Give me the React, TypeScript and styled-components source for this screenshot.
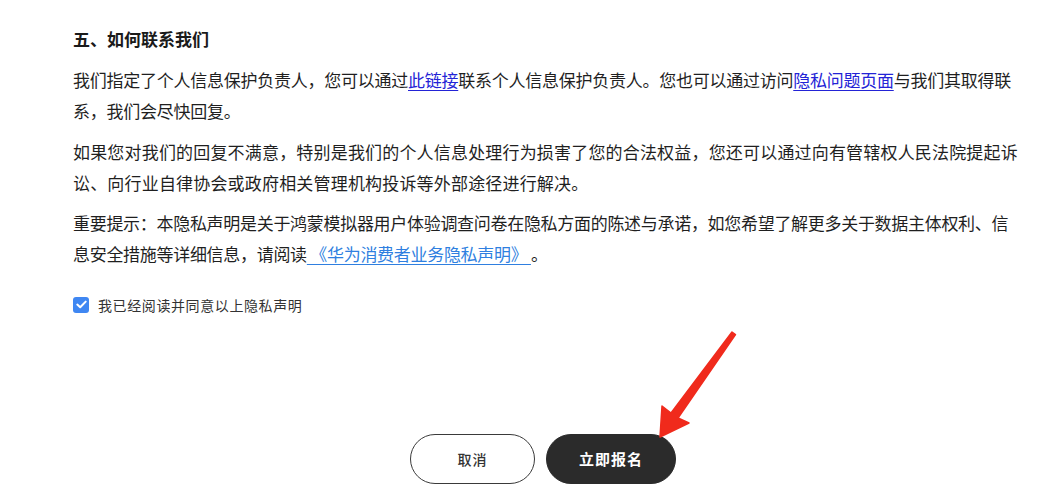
import styled, { createGlobalStyle } from "styled-components";

const GlobalStyle = createGlobalStyle`
  html, body {
    margin: 0;
    padding: 0;
    background: #fff;
  }

  body {
    font-family: "Noto Sans CJK SC", "Noto Sans", sans-serif;
    color: #1f1f1f;
  }
`;

export default function App() {
  return (
    <>
      <GlobalStyle />
      <Page>
        <Content>
          <Heading>五、如何联系我们</Heading>

          <Paragraph $spacing={-0.25}>
            我们指定了个人信息保护负责人，您可以通过<Link href="#">此链接</Link>
            联系个人信息保护负责人。您也可以通过访问
            <Link href="#">隐私问题页面</Link>与我们其取得联
            <br />
            系，我们会尽快回复。
          </Paragraph>

          <Paragraph $spacing={0.18}>
            如果您对我们的回复不满意，特别是我们的个人信息处理行为损害了您的合法权益，您还可以通过向有管辖权人民法院提起诉
            <br />
            讼、向行业自律协会或政府相关管理机构投诉等外部途径进行解决。
          </Paragraph>

          <Paragraph $spacing={-0.3}>
            重要提示：本隐私声明是关于鸿蒙模拟器用户体验调查问卷在隐私方面的陈述与承诺，如您希望了解更多关于数据主体权利、信
            <br />
            <Tight>
              息安全措施等详细信息，请阅读
              <PolicyLink href="#"> 《华为消费者业务隐私声明》 </PolicyLink>。
            </Tight>
          </Paragraph>

          <Agree>
            <CheckBox>
              <svg width="11" height="9" viewBox="0 0 11 9">
                <path
                  d="M1.3 4.6 L4.2 7.3 L9.7 1.6"
                  fill="none"
                  stroke="#fff"
                  strokeWidth="2"
                  strokeLinecap="round"
                  strokeLinejoin="round"
                />
              </svg>
            </CheckBox>
            我已经阅读并同意以上隐私声明
          </Agree>

          <Actions>
            <Button>取消</Button>
            <Button $primary>立即报名</Button>
          </Actions>
        </Content>

        <Arrow width="100" height="120" viewBox="650 325 100 120">
          <polygon
            points="732,332 735.5,334.5 678,418 689,423 660,437 662,406 671,413"
            fill="#f02a1c"
            stroke="#f02a1c"
            strokeWidth="1.5"
            strokeLinejoin="round"
          />
        </Arrow>
      </Page>
    </>
  );
}

const Page = styled.div`
  position: relative;
  width: 1055px;
  height: 500px;
  overflow: hidden;
`;

const Content = styled.div`
  display: flex;
  flex-direction: column;
  width: 940px;
  padding: 27px 0 0 73px;
`;

const Heading = styled.h3`
  margin: 0 0 13px;
  font-size: 17px;
  font-weight: 700;
  line-height: 24px;
  color: #1a1a1a;
`;

const Paragraph = styled.p<{ $spacing: number }>`
  margin: 0 0 9.5px;
  font-size: 17px;
  line-height: 31px;
  letter-spacing: ${(p) => p.$spacing}px;
  white-space: nowrap;
`;

const Tight = styled.span`
  letter-spacing: -0.3px;
`;

const Link = styled.a`
  color: #2323d6;
  text-decoration: underline;
  text-underline-offset: 3px;
`;

const PolicyLink = styled.a`
  color: #2f7fe0;
  text-decoration: underline;
  text-underline-offset: 3px;
  white-space: pre;
`;

const Agree = styled.label`
  display: flex;
  align-items: center;
  gap: 9px;
  margin-top: 16px;
  height: 20px;
  font-size: 14px;
  letter-spacing: 0.6px;
  color: #333;
`;

const CheckBox = styled.span`
  display: flex;
  align-items: center;
  justify-content: center;
  width: 16px;
  height: 16px;
  border-radius: 3px;
  background: #3f87f2;
`;

const Actions = styled.div`
  display: flex;
  justify-content: center;
  gap: 11px;
  margin-top: 119px;
`;

const Button = styled.button<{ $primary?: boolean }>`
  display: flex;
  align-items: center;
  justify-content: center;
  width: ${(p) => (p.$primary ? "130px" : "125px")};
  height: 50px;
  border-radius: 25px;
  border: 1px solid ${(p) => (p.$primary ? "#2b2b2b" : "#3a3a3a")};
  background: ${(p) => (p.$primary ? "#2b2b2b" : "#fff")};
  color: ${(p) => (p.$primary ? "#fff" : "#333")};
  font-family: "Noto Sans CJK SC", sans-serif;
  font-size: ${(p) => (p.$primary ? "15px" : "14px")};
  font-weight: ${(p) => (p.$primary ? 700 : 500)};
  letter-spacing: 1px;
  cursor: pointer;
`;

const Arrow = styled.svg`
  position: absolute;
  left: 650px;
  top: 325px;
  pointer-events: none;
`;
